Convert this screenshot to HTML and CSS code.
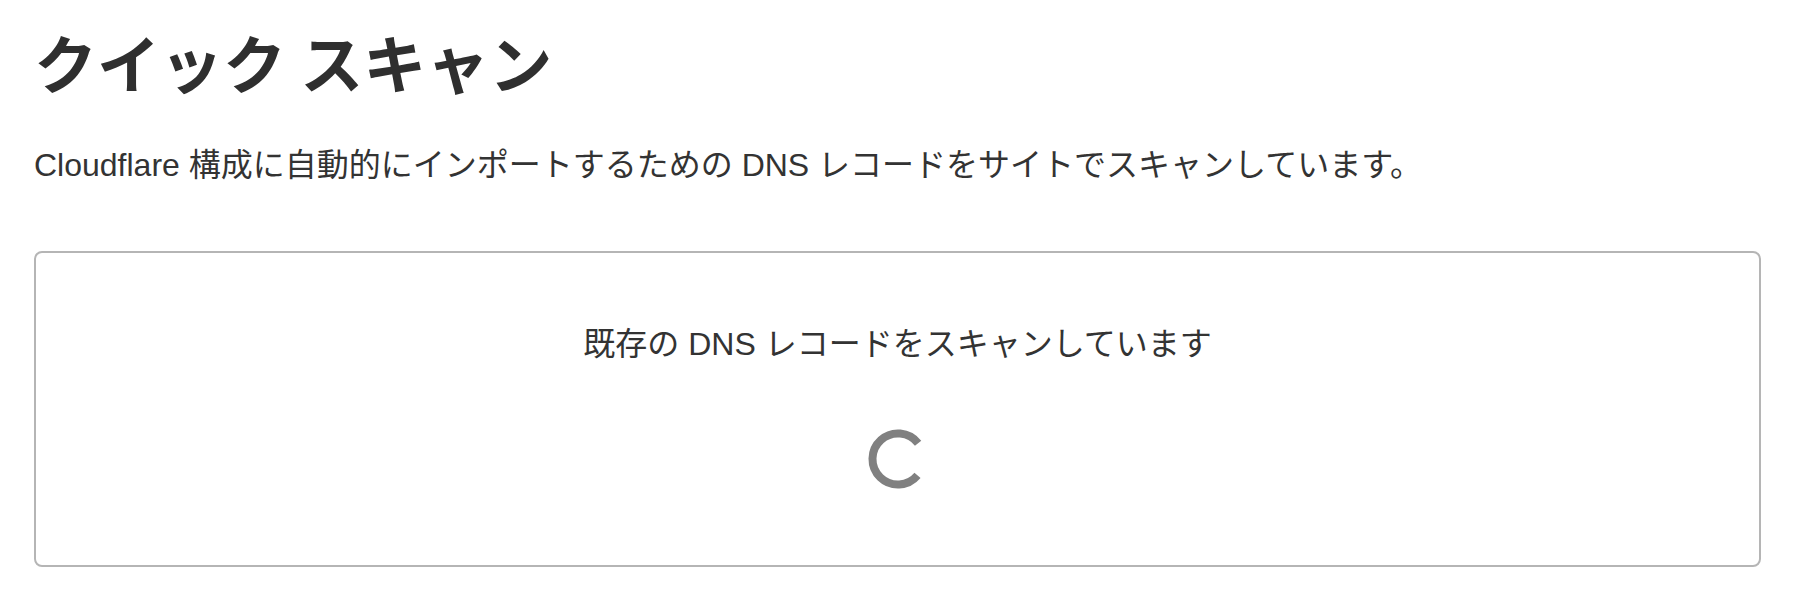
FILE: index.html
```html
<!DOCTYPE html>
<html lang="ja">
<head>
<meta charset="utf-8">
<title>クイック スキャン</title>
<link rel="stylesheet" href="styles.css">
</head>
<body>
<main class="page">
  <h1 class="title">クイック スキャン</h1>
  <p class="lead">Cloudflare 構成に自動的にインポートするための DNS レコードをサイトでスキャンしています。</p>
  <section class="scan-card">
    <p class="scan-text">既存の DNS レコードをスキャンしています</p>
    <svg class="spinner" width="64" height="64" viewBox="0 0 64 64" aria-hidden="true">
      <path d="M52.1 16.3 A25.5 25.5 0 1 0 51.5 48.4" fill="none" stroke="#808080" stroke-width="8"/>
    </svg>
  </section>
</main>
</body>
</html>
```

FILE: styles.css
```css
html, body {
  margin: 0;
  padding: 0;
  background: #ffffff;
}

body {
  font-family: "Liberation Sans", "Noto Sans CJK JP", sans-serif;
  color: #333333;
}

.page {
  padding: 24px 36px 0 34px;
}

.title {
  margin: 0;
  font-size: 63px;
  line-height: 74px;
  font-weight: 700;
  color: #2f2f2f;
  font-family: "Noto Sans CJK JP", sans-serif;
}

.lead {
  margin: 47px 0 0 0;
  font-size: 32px;
  line-height: 40px;
  color: #333333;
}

.scan-card {
  margin-top: 66px;
  height: 316px;
  box-sizing: border-box;
  border: 2px solid #b5b5b5;
  border-radius: 8px;
  display: flex;
  flex-direction: column;
  align-items: center;
  padding-top: 71px;
}

.scan-text {
  margin: 0;
  font-size: 32px;
  line-height: 40px;
  color: #333333;
}

.spinner {
  display: block;
  margin-top: 63px;
}
```
